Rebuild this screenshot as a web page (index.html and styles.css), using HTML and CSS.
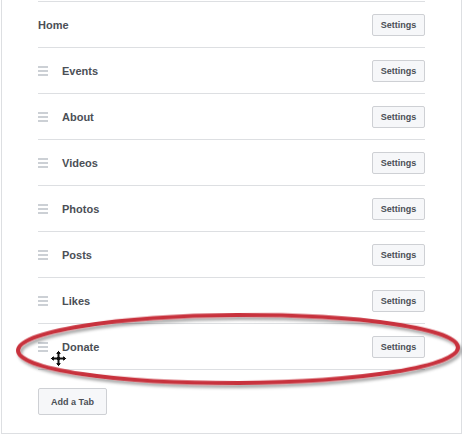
FILE: index.html
```html
<!DOCTYPE html>
<html lang="en">
<head>
    <meta charset="UTF-8">
    <title>Tabs</title>
    <link rel="stylesheet" href="styles.css">
</head>
<body>

    <div class="panel">
        <ul class="tabs">
            <li class="tab">
                <span class="name">Home</span>
                <button class="btn">Settings</button>
            </li>
            <li class="tab">
                <span class="handle"></span>
                <span class="name">Events</span>
                <button class="btn">Settings</button>
            </li>
            <li class="tab">
                <span class="handle"></span>
                <span class="name">About</span>
                <button class="btn">Settings</button>
            </li>
            <li class="tab">
                <span class="handle"></span>
                <span class="name">Videos</span>
                <button class="btn">Settings</button>
            </li>
            <li class="tab">
                <span class="handle"></span>
                <span class="name">Photos</span>
                <button class="btn">Settings</button>
            </li>
            <li class="tab">
                <span class="handle"></span>
                <span class="name">Posts</span>
                <button class="btn">Settings</button>
            </li>
            <li class="tab">
                <span class="handle"></span>
                <span class="name">Likes</span>
                <button class="btn">Settings</button>
            </li>
            <li class="tab">
                <span class="handle"></span>
                <span class="name">Donate</span>
                <button class="btn">Settings</button>
            </li>
        </ul>

        <button class="btn add">Add a Tab</button>

        <!-- red marker drawn around the Donate row -->
        <svg class="circle" width="462" height="100" viewBox="0 0 462 100">
            <defs>
                <filter id="shadow" x="-5%" y="-20%" width="110%" height="140%">
                    <feDropShadow dx="2" dy="3" stdDeviation="1.5" flood-color="#000" flood-opacity="0.35"/>
                </filter>
            </defs>
            <ellipse cx="236" cy="49" rx="220" ry="34" fill="none" stroke="#c8323d" stroke-width="4" filter="url(#shadow)" transform="rotate(-0.4 236 49)"/>
        </svg>

        <!-- move cursor -->
        <svg class="cursor" width="17" height="17" viewBox="0 0 17 17">
            <path d="M8.5 0.5 L12 4 L10 4 L10 7 L13 7 L13 5 L16.5 8.5 L13 12 L13 10 L10 10 L10 13 L12 13 L8.5 16.5 L5 13 L7 13 L7 10 L4 10 L4 12 L0.5 8.5 L4 5 L4 7 L7 7 L7 4 L5 4 Z" fill="#111" stroke="#fff" stroke-width="1"/>
        </svg>
    </div>

</body>
</html>
```

FILE: styles.css
```css
body {
    font-family: "Liberation Sans", Arial, sans-serif;
    margin: 0;
    padding: 0;
    background-color: white;
}
.panel {
    position: relative;
    width: 387px;
    margin-left: 1px;
    padding: 1px 36px 18px 36px;
    border: 1px solid #dddfe2;
    border-top: none;
}
.tabs {
    list-style: none;
    margin: 0;
    padding: 0;
    border-bottom: 1px solid #dddfe2;
}
.tab {
    display: flex;
    align-items: center;
    height: 45px;
    border-top: 1px solid #dddfe2;
}
.name {
    flex: 1;
    font-size: 11px;
    font-weight: bold;
    color: #4b4f56;
}
.handle {
    width: 10px;
    height: 2px;
    margin-right: 14px;
    background-color: #ccd0d5;
    box-shadow: 0 -4px 0 #ccd0d5, 0 4px 0 #ccd0d5;
}
.btn {
    font-family: "Liberation Sans", Arial, sans-serif;
    font-size: 9px;
    font-weight: bold;
    color: #4b4f56;
    background-color: #f6f7f9;
    border: 1px solid #ced0d4;
    border-radius: 2px;
    height: 22px;
    width: 53px;
    padding: 0;
}
.add {
    display: block;
    margin-top: 18px;
    width: 69px;
    height: 27px;
}
.circle {
    position: absolute;
    left: 0;
    top: 300px;
}
.cursor {
    position: absolute;
    left: 48px;
    top: 350px;
}
```
